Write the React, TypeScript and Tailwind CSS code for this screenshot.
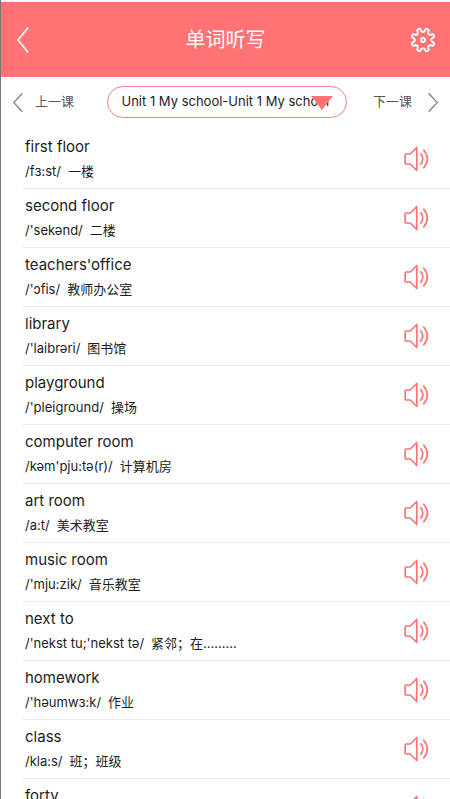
import { useState } from 'react';

const UNITS = ['Unit 1 My school-Unit 1 My school'];

const WORDS = [
  { word: 'first floor', phonetic: "/fɜ:st/", meaning: '一楼' },
  { word: 'second floor', phonetic: "/'sekənd/", meaning: '二楼' },
  { word: "teachers'office", phonetic: "/'ɔfis/", meaning: '教师办公室' },
  { word: 'library', phonetic: "/'laibrəri/", meaning: '图书馆' },
  { word: 'playground', phonetic: "/'pleiground/", meaning: '操场' },
  { word: 'computer room', phonetic: "/kəm'pju:tə(r)/", meaning: '计算机房' },
  { word: 'art room', phonetic: '/a:t/', meaning: '美术教室' },
  { word: 'music room', phonetic: "/'mju:zik/", meaning: '音乐教室' },
  { word: 'next to', phonetic: "/'nekst tu;'nekst tə/", meaning: '紧邻；在.........' },
  { word: 'homework', phonetic: "/'həumwɜ:k/", meaning: '作业' },
  { word: 'class', phonetic: '/kla:s/', meaning: '班；班级' },
  { word: 'forty', phonetic: '', meaning: '' },
];

// eight rounded teeth, the first pair either side of twelve o'clock
function gearPath() {
  const pt = (r: number, deg: number) => {
    const a = (deg * Math.PI) / 180;
    return `${(13 + r * Math.sin(a)).toFixed(2)} ${(13 - r * Math.cos(a)).toFixed(2)}`;
  };
  let d = '';
  for (let i = 0; i < 8; i++) {
    const c = 22.5 + i * 45;
    d += `${i === 0 ? 'M' : 'L'}${pt(9.1, c - 12)}L${pt(11, c - 9)}Q${pt(12, c - 7)} ${pt(11.8, c)}`;
    d += `Q${pt(12, c + 7)} ${pt(11, c + 9)}L${pt(9.1, c + 12)}Q${pt(7.2, c + 22.5)} ${pt(9.1, c + 33)}`;
  }
  return d + 'Z';
}

function GearIcon() {
  return (
    <svg width="26" height="26" viewBox="0 0 26 26" fill="none" stroke="currentColor" strokeWidth="1.9" strokeLinejoin="round">
      <path d={gearPath()} />
      <circle cx="13" cy="13" r="2" />
    </svg>
  );
}

function SpeakerIcon() {
  return (
    <svg width="26" height="26" viewBox="0 0 26 26" fill="none" stroke="currentColor" strokeWidth="1.7" strokeLinecap="round" strokeLinejoin="round">
      <path d="M2.2 8H6.2L12.8 1.5V24.5L6.2 18H2.2Q1.2 18 1.2 17V9Q1.2 8 2.2 8Z" />
      <path d="M16.8 7.8Q20.8 13 16.8 18.2" />
      <path d="M19.8 4.2Q27 13 19.8 21.8" />
    </svg>
  );
}

function Chevron({ direction, className }: { direction: 'left' | 'right'; className: string }) {
  return (
    <svg className={className} viewBox="0 0 10 24" preserveAspectRatio="none" fill="none" stroke="currentColor" strokeWidth="1.4">
      <path d={direction === 'left' ? 'M9.3 0.5L0.8 12L9.3 23.5' : 'M0.7 0.5L9.2 12L0.7 23.5'} />
    </svg>
  );
}

function WordRow({ word, phonetic, meaning }: { word: string; phonetic: string; meaning: string }) {
  return (
    <li className="h-[59px] shrink-0 flex items-center justify-between border-b border-[#e9e9e9] pr-5 pl-0.5">
      <div className="min-w-0">
        <p className="text-[15px] leading-6">{word}</p>
        <p className="flex items-center gap-[7px] h-6 text-[13px] leading-6">
          <span>{phonetic}</span>
          <span>{meaning}</span>
        </p>
      </div>
      <button type="button" aria-label={`播放 ${word}`} className="text-[#f87575]">
        <SpeakerIcon />
      </button>
    </li>
  );
}

export default function App() {
  const [unit, setUnit] = useState(UNITS[0]);

  return (
    <div className="h-screen flex flex-col overflow-hidden border-l border-[#777] bg-white pt-0.5 text-[#1c1c1c] font-[Inter,'Noto_Sans_CJK_SC',sans-serif]">
      <header className="h-[75px] shrink-0 flex items-center justify-between bg-[#ff7375] px-4 pr-3.5 text-white">
        <button type="button" aria-label="返回" className="w-6">
          <Chevron direction="left" className="w-3 h-[26px]" />
        </button>
        <h1 className="text-xl font-normal">单词听写</h1>
        <button type="button" aria-label="设置">
          <GearIcon />
        </button>
      </header>

      <nav className="h-[50px] shrink-0 flex items-center justify-between px-3 text-[13px] text-[#555]">
        <button type="button" className="flex items-center gap-3">
          <Chevron direction="left" className="w-2.5 h-[19px] text-[#777]" />
          上一课
        </button>
        <div className="relative w-60 ml-1.5">
          <select
            aria-label="选择单元"
            value={unit}
            onChange={(e) => setUnit(e.target.value)}
            className="w-full h-8 appearance-none rounded-full border border-[#f28586] bg-white pl-3.5 text-[13px] text-[#1c1c1c]"
          >
            {UNITS.map((u) => (
              <option key={u}>{u}</option>
            ))}
          </select>
          <svg className="pointer-events-none absolute right-3.5 top-2.5 w-[22px] h-[14px]" viewBox="0 0 22 14">
            <path d="M0 0H22L11 14Z" fill="#ff7375" />
          </svg>
        </div>
        <button type="button" className="flex items-center gap-4">
          下一课
          <Chevron direction="right" className="w-2.5 h-[19px] text-[#777]" />
        </button>
      </nav>

      <ul className="flex-1 min-h-0 flex flex-col overflow-hidden pl-[22px] pt-[3px]">
        {WORDS.map((w) => (
          <WordRow key={w.word} {...w} />
        ))}
      </ul>
    </div>
  );
}
